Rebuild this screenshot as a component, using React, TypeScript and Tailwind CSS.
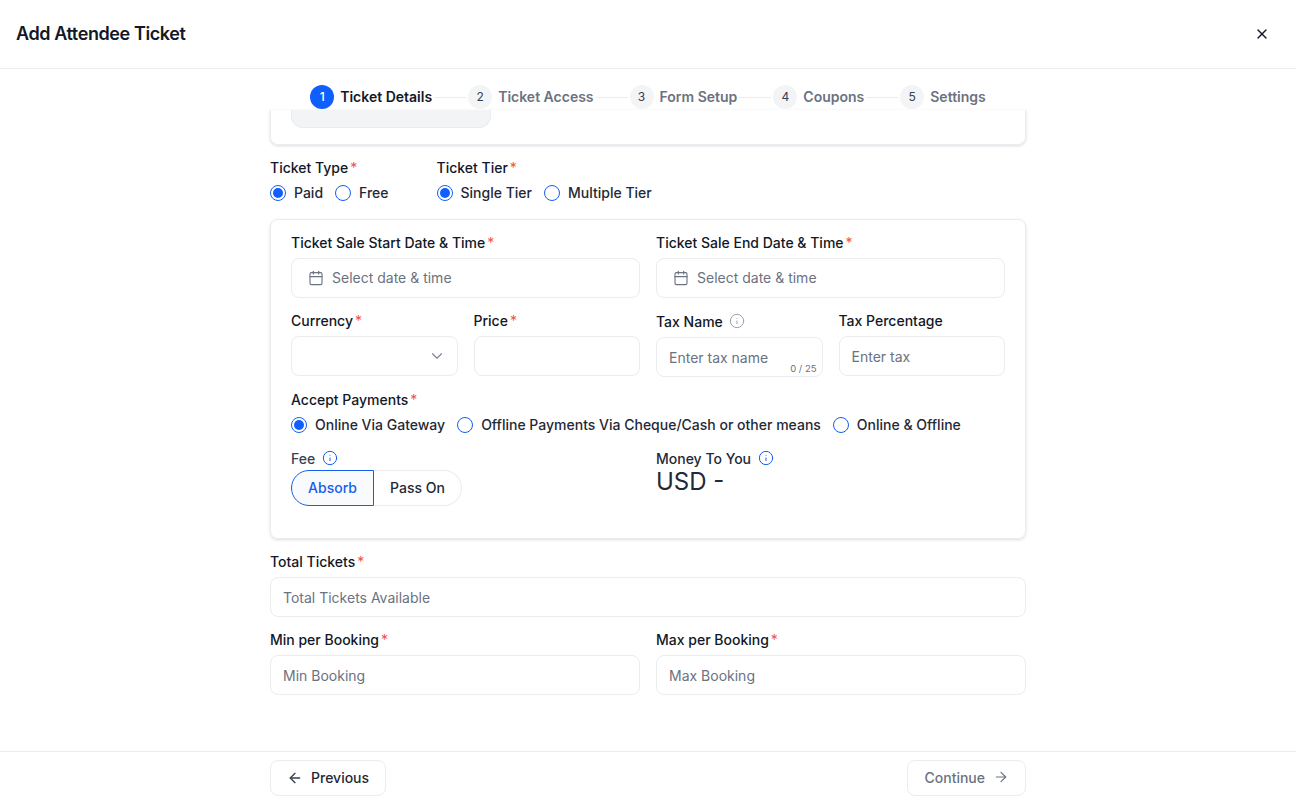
import { ArrowLeft, ArrowRight, Calendar, ChevronDown, Info, X } from "lucide-react";
import type { ReactNode } from "react";

function Label({ children, req = false }: { children: ReactNode; req?: boolean }) {
  return (
    <div className="flex h-[20px] items-center text-[14px] font-medium leading-[20px] text-[#111827]">
      <span>{children}</span>
      {req && <span className="ml-[2px] font-normal text-[#f0524a]">*</span>}
    </div>
  );
}

function Radio({ label, checked = false }: { label: string; checked?: boolean }) {
  return (
    <div className="flex h-[20px] items-center gap-[8px]">
      <span className="flex h-[16px] w-[16px] items-center justify-center rounded-full border-[1.5px] border-[#155eef] bg-white">
        {checked && <span className="h-[10px] w-[10px] rounded-full bg-[#0f5fff]" />}
      </span>
      <span className="text-[14px] font-medium leading-[20px] text-[#1f2937]">{label}</span>
    </div>
  );
}

function Input({ placeholder, className = "" }: { placeholder?: string; className?: string }) {
  return (
    <div className={`flex h-[40px] items-center rounded-[8px] border border-[#eaecf0] bg-white px-[12px] text-[14px] text-[#6b7280] ${className}`}>
      {placeholder}
    </div>
  );
}

function DateInput() {
  return (
    <div className="mt-[5px] flex h-[40px] items-center gap-[8px] rounded-[8px] border border-[#eaecf0] bg-white pl-[16px] text-[14px] leading-[20px] text-[#6b7280]">
      <Calendar size={16} strokeWidth={1.67} className="text-[#6b7280]" />
      <span>Select date &amp; time</span>
    </div>
  );
}

function Step({ n, label, active = false, last = false }: { n: number; label: string; active?: boolean; last?: boolean }) {
  return (
    <div className="flex items-center">
      <span className={`flex h-[24px] w-[24px] items-center justify-center rounded-full text-[12px] ${active ? "bg-[#0f5fff] font-medium text-white" : "bg-[#f3f4f6] text-[#374151]"}`}>{n}</span>
      <span className={`ml-[6px] text-[14px] font-semibold leading-[20px] ${active ? "text-[#111827]" : "text-[#6b7280]"}`}>{label}</span>
      {!last && <span className="mx-[2px] h-px w-[32px] bg-[#eaecf0]" />}
    </div>
  );
}

export default function App() {
  return (
    <div className="flex h-[804px] w-full flex-col overflow-hidden bg-white font-['Inter',sans-serif]">
      <header className="flex h-[69px] shrink-0 items-center justify-between border-b border-[#eaecf0] pl-[16px] pr-[26px]">
        <h1 className="text-[18px] font-semibold leading-[28px] tracking-[-0.4px] text-[#111827]">Add Attendee Ticket</h1>
        <X size={16} strokeWidth={2} className="text-[#111827]" />
      </header>

      <main className="flex-1 overflow-hidden">
        <div className="mx-auto w-[756px]">
          <div className="flex h-[41px] items-start justify-center pt-[16px]">
            <Step n={1} label="Ticket Details" active />
            <Step n={2} label="Ticket Access" />
            <Step n={3} label="Form Setup" />
            <Step n={4} label="Coupons" />
            <Step n={5} label="Settings" last />
          </div>

          <div className="h-[35px] rounded-b-[8px] border border-t-0 border-[#eaecf0] px-[20px] shadow-[0_1px_3px_rgba(16,24,40,0.15)]">
            <div className="h-[18px] w-[200px] rounded-b-[12px] border border-t-0 border-[#eaecf0] bg-[#f3f4f6]" />
          </div>

          <div className="mt-[13px] flex gap-[48px]">
            <div>
              <Label req>Ticket Type</Label>
              <div className="mt-[5px] flex gap-[12px]">
                <Radio label="Paid" checked />
                <Radio label="Free" />
              </div>
            </div>
            <div>
              <Label req>Ticket Tier</Label>
              <div className="mt-[5px] flex gap-[12px]">
                <Radio label="Single Tier" checked />
                <Radio label="Multiple Tier" />
              </div>
            </div>
          </div>

          <section className="mt-[16px] h-[320px] rounded-[8px] border border-[#eaecf0] px-[20px] pt-[13px] shadow-[0_1px_3px_rgba(16,24,40,0.15)]">
            <div className="grid grid-cols-2 gap-[16px]">
              <div>
                <Label req>Ticket Sale Start Date &amp; Time</Label>
                <DateInput />
              </div>
              <div>
                <Label req>Ticket Sale End Date &amp; Time</Label>
                <DateInput />
              </div>
            </div>

            <div className="mt-[13px] grid grid-cols-4 gap-[16px]">
              <div>
                <Label req>Currency</Label>
                <div className="mt-[5px] flex h-[40px] items-center justify-end rounded-[8px] border border-[#eaecf0] pr-[11px]">
                  <ChevronDown size={18} strokeWidth={1.5} className="text-[#7a8494]" />
                </div>
              </div>
              <div>
                <Label req>Price</Label>
                <Input className="mt-[5px]" />
              </div>
              <div>
                <div className="flex h-[20px] items-center gap-[6px] text-[14px] font-medium text-[#111827]">
                  <span>Tax Name</span>
                  <Info size={16} strokeWidth={1.5} className="text-[#98a2b3]" />
                </div>
                <div className="relative mt-[6px] flex h-[40px] items-center rounded-[8px] border border-[#eaecf0] px-[12px] text-[14px] text-[#6b7280]">
                  Enter tax name
                  <span className="absolute bottom-[0px] right-[5px] text-[9.5px] leading-[14px] text-[#6b7280]">0 / 25</span>
                </div>
              </div>
              <div>
                <Label>Tax Percentage</Label>
                <Input placeholder="Enter tax" className="mt-[5px]" />
              </div>
            </div>

            <div className="mt-[13px]">
              <Label req>Accept Payments</Label>
              <div className="mt-[5px] flex gap-[12px]">
                <Radio label="Online Via Gateway" checked />
                <Radio label="Offline Payments Via Cheque/Cash or other means" />
                <Radio label="Online & Offline" />
              </div>
            </div>

            <div className="mt-[13px] grid grid-cols-2 gap-[16px]">
              <div>
                <div className="flex h-[20px] items-center gap-[7px] text-[14px] font-medium text-[#374151]">
                  <span>Fee</span>
                  <Info size={16} strokeWidth={1.5} className="text-[#155eef]" />
                </div>
                <div className="mt-[2px] flex h-[36px] w-[171px] text-[14px] font-medium leading-[20px]">
                  <div className="flex w-[83px] items-center justify-center rounded-l-full border border-[#155eef] bg-[#f8fafc] text-[#155eef]">Absorb</div>
                  <div className="flex flex-1 items-center justify-center rounded-r-full border border-l-0 border-[#eaecf0] text-[#1f2937]">Pass On</div>
                </div>
              </div>
              <div>
                <div className="flex h-[20px] items-center gap-[7px] text-[14px] font-medium text-[#1f2937]">
                  <span>Money To You</span>
                  <Info size={16} strokeWidth={1.5} className="text-[#155eef]" />
                </div>
                <div className="mt-[1px] text-[24px] font-normal leading-[26px] text-[#1f2937]">USD -</div>
              </div>
            </div>
          </section>

          <div className="mt-[13px]">
            <Label req>Total Tickets</Label>
            <Input placeholder="Total Tickets Available" className="mt-[5px]" />
          </div>

          <div className="mt-[13px] grid grid-cols-2 gap-[16px]">
            <div>
              <Label req>Min per Booking</Label>
              <Input placeholder="Min Booking" className="mt-[5px]" />
            </div>
            <div>
              <Label req>Max per Booking</Label>
              <Input placeholder="Max Booking" className="mt-[5px]" />
            </div>
          </div>
        </div>
      </main>

      <footer className="h-[53px] shrink-0 border-t border-[#eaecf0]">
        <div className="mx-auto flex w-[756px] justify-between pt-[8px]">
          <div className="flex h-[36px] items-center gap-[8px] rounded-[8px] border border-[#eaecf0] px-[16px] text-[14px] font-medium leading-[20px] text-[#1f2937]">
            <ArrowLeft size={16} strokeWidth={2} className="text-[#374151]" />
            Previous
          </div>
          <div className="flex h-[36px] items-center gap-[8px] rounded-[8px] border border-[#eaecf0] px-[16px] text-[14px] font-medium leading-[20px] text-[#6b7280]">
            Continue
            <ArrowRight size={16} strokeWidth={1.75} className="-translate-y-px text-[#6b7280]" />
          </div>
        </div>
      </footer>
    </div>
  );
}
